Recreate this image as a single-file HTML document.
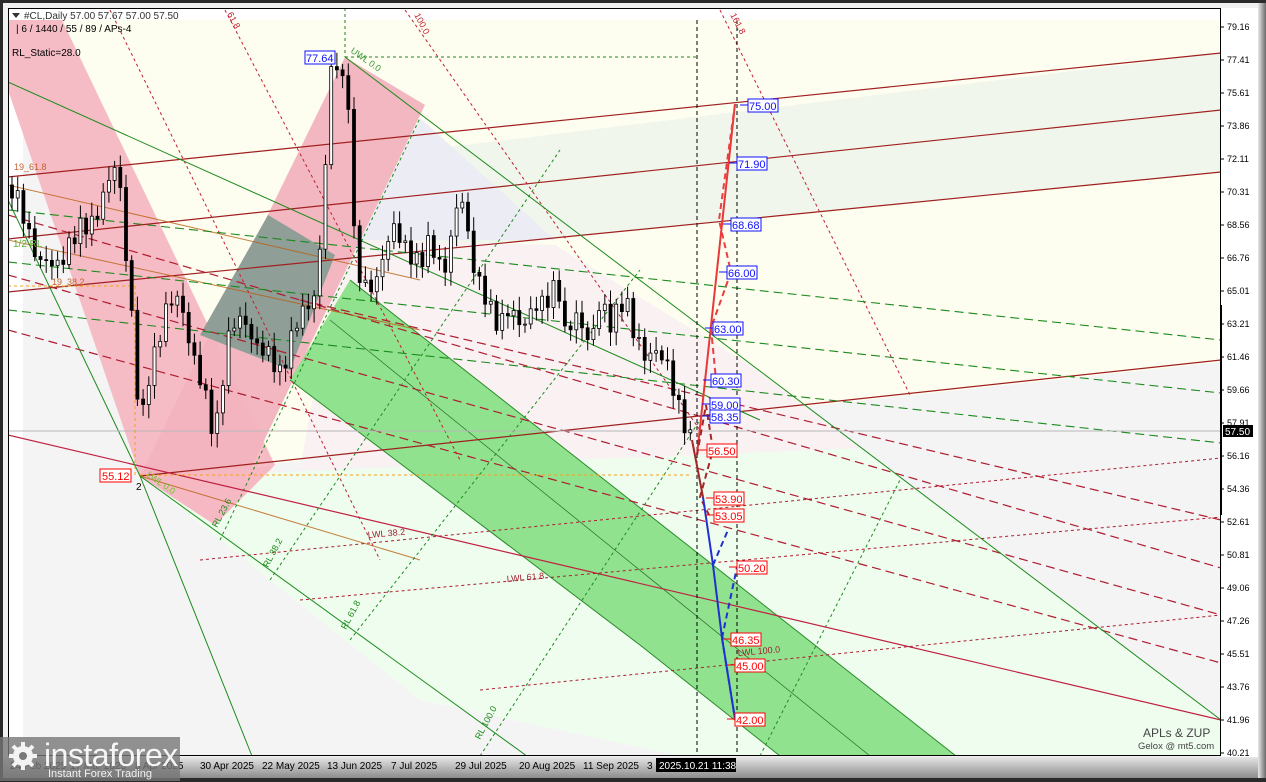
<!DOCTYPE html>
<html><head><meta charset="utf-8"><style>
html,body{margin:0;padding:0;background:#3a3a3a;}
#w{position:relative;width:1266px;height:782px;overflow:hidden;background:linear-gradient(#d8d8d8,#9a9a9a);}
svg{position:absolute;left:0;top:0;}
text{font-family:"Liberation Sans",sans-serif;}
</style></head><body><div id="w">
<svg id="s" width="1266" height="782" viewBox="0 0 1266 782">
<defs>
<linearGradient id="fr" x1="0" x2="1"><stop offset="0" stop-color="#e8e8e8"/><stop offset="1" stop-color="#6a6a6a"/></linearGradient>
<linearGradient id="bt" x1="0" y1="0" x2="0" y2="1"><stop offset="0" stop-color="#e6e6e6"/><stop offset="1" stop-color="#8c8c8c"/></linearGradient>
<clipPath id="cp"><rect x="9" y="9" width="1212" height="747"/></clipPath>
</defs>
<rect x="0" y="0" width="1266" height="782" fill="#2a2a2a"/>
<rect x="3" y="3" width="1257" height="774" fill="#f0f0f0"/>
<rect x="1258" y="3" width="8" height="775" fill="url(#fr)"/>
<rect x="3" y="757" width="1255" height="21" fill="url(#bt)"/>
<rect x="1221" y="8" width="37" height="749" fill="#fff"/>
<g clip-path="url(#cp)">
<rect x="8" y="8" width="1213" height="748" fill="#f4f4f4"/>
<rect x="8" y="8" width="15" height="748" fill="#fff"/>
<polygon points="50,20 1221,20 1221,362 140,478" fill="#fefef0"/>
<rect x="8" y="8" width="1213" height="12" fill="#fff"/>
<polygon points="300,165 1221,53 1221,172 300,263" fill="#f1f6ec"/>
<polygon points="140,478 860,448 1221,720 1221,756 252,756 140,476" fill="#effdef"/>
<polygon points="140,476 420,700 680,756 252,756" fill="#f4f4f4"/>
<polygon points="140,476 252,756 23,756 23,470" fill="#f4f4f4"/>
<polygon points="350,240 555,245 750,365 860,448 700,455 300,470 330,300" fill="#f9f1f2"/>
<polygon points="360,240 420,118 555,240" fill="#ececf4"/>
<polygon points="8,20 62,20 275,465 140,476 8,90" fill="#f6b8c2" opacity="0.95"/>
<polygon points="140,476 345,57 425,105 250,470" fill="#f2b3bf" opacity="0.95"/>
<polygon points="140,476 275,465 215,525" fill="#f6b8c2"/>
<polygon points="200,335 268,215 335,255 290,370" fill="#8f9e96"/>
<polygon points="350,280 640,508 956,756 780,756 640,645 290,380" fill="#90e28f"/>
<line x1="640" y1="645" x2="780" y2="756" stroke="#2a8a2a" stroke-width="1"/>
<line x1="290" y1="380" x2="640" y2="645" stroke="#2a8a2a"/>
<line x1="350" y1="280" x2="956" y2="756" stroke="#2a8a2a"/>
<line x1="330" y1="320" x2="870" y2="756" stroke="#2a6a2a" stroke-width="0.7"/>
<g stroke="#a02020" stroke-width="1.2" fill="none">
<line x1="8" y1="177" x2="1221" y2="53"/>
<line x1="8" y1="239" x2="1221" y2="110"/>
<line x1="8" y1="292" x2="1221" y2="172"/>
<line x1="140" y1="476" x2="1221" y2="360"/>
<line x1="8" y1="435" x2="1221" y2="720" stroke="#c02040"/>
</g>
<g stroke="#b86010" stroke-width="1" fill="none" opacity="0.8">
<line x1="8" y1="185" x2="420" y2="280"/>
<line x1="8" y1="240" x2="420" y2="330"/>
<line x1="140" y1="476" x2="420" y2="560"/>
</g>
<g stroke="#b01c30" stroke-width="1.2" stroke-dasharray="9,5" fill="none">
<line x1="8" y1="215" x2="1221" y2="568"/>
<line x1="8" y1="275" x2="1221" y2="615"/>
<line x1="8" y1="330" x2="1221" y2="663"/>
<line x1="300" y1="300" x2="1221" y2="520"/>
</g>
<g stroke="#b01c30" stroke-width="1" stroke-dasharray="3,3" fill="none">
<line x1="200" y1="560" x2="1221" y2="458"/>
<line x1="300" y1="600" x2="1221" y2="517"/>
<line x1="480" y1="690" x2="1221" y2="615"/>
</g>
<g stroke="#c02030" stroke-width="1" stroke-dasharray="3,3" fill="none">
<line x1="225" y1="10" x2="460" y2="460"/>
<line x1="110" y1="10" x2="380" y2="560"/>
<line x1="405" y1="10" x2="700" y2="430"/>
<line x1="720" y1="10" x2="910" y2="395"/>
</g>
<g stroke="#1c8a1c" stroke-width="1.1" stroke-dasharray="9,5" fill="none">
<line x1="8" y1="210" x2="1221" y2="340"/>
<line x1="8" y1="262" x2="1221" y2="393"/>
<line x1="8" y1="310" x2="1221" y2="443"/>
</g>
<g stroke="#1c8a1c" stroke-width="1" fill="none">
<line x1="345" y1="57" x2="1221" y2="720"/>
<line x1="8" y1="82" x2="760" y2="420"/>
<line x1="140" y1="476" x2="252" y2="756"/>
<line x1="140" y1="476" x2="560" y2="780"/>
<line x1="8" y1="200" x2="140" y2="476"/>
</g>
<g stroke="#1c8a1c" stroke-width="1" stroke-dasharray="3,3" fill="none">
<line x1="220" y1="540" x2="420" y2="118"/>
<line x1="270" y1="580" x2="560" y2="150"/>
<line x1="350" y1="640" x2="640" y2="270"/>
<line x1="480" y1="756" x2="700" y2="420"/>
<line x1="760" y1="756" x2="900" y2="480"/>
<line x1="345" y1="8" x2="345" y2="57"/>
</g>
<line x1="345" y1="57" x2="697" y2="57" stroke="#1c8a1c" stroke-dasharray="3,3"/>
<line x1="8" y1="431" x2="1221" y2="431" stroke="#b8b8b8"/>
<line x1="8" y1="286" x2="135" y2="286" stroke="#f0a020" stroke-dasharray="3,3"/>
<line x1="135" y1="286" x2="135" y2="476" stroke="#f0a020" stroke-dasharray="3,3"/>
<line x1="140" y1="475" x2="690" y2="475" stroke="#f0a020" stroke-dasharray="3,3"/>
<line x1="697" y1="20" x2="697" y2="756" stroke="#000" stroke-dasharray="4,3"/>
<line x1="737" y1="20" x2="737" y2="756" stroke="#000" stroke-dasharray="4,3"/>
<g id="candles"></g>
<g fill="none" stroke-width="2">
<line x1="697" y1="455" x2="735" y2="104" stroke="#e83838"/>
<polyline points="735,104 719,220 731,272 711,328 716,380" stroke="#e84040" stroke-dasharray="6,4"/>
<polyline points="697,455 706,405 713,450 700,497 709,515" stroke="#a02828" stroke-dasharray="6,4"/>
<line x1="692" y1="440" x2="703" y2="497" stroke="#a02828"/>
<polyline points="703,497 713,565 722,638 735,719" stroke="#2030d0"/>
<polyline points="713,565 728,530" stroke="#2030d0" stroke-dasharray="6,4"/>
<polyline points="722,638 737,567" stroke="#2030d0" stroke-dasharray="6,4"/>
<polyline points="722,638 735,719" stroke="#2030d0" stroke-dasharray="6,4"/>
</g>
<g font-size="11" text-anchor="start">
<text x="368" y="538" fill="#a02030" font-size="9" transform="rotate(-5 368 538)">LWL 38.2</text>
<text x="507" y="582" fill="#a02030" font-size="9" transform="rotate(-5 507 582)">LWL 61.8</text>
<text x="738" y="656" fill="#a02030" font-size="9" transform="rotate(-5 738 656)">LWL 100.0</text>
<text x="14" y="170" fill="#c06030" font-size="9">19_61.8</text>
<text x="13" y="247" fill="#60b030" font-size="10">1/2 RL</text>
<text x="52" y="285" fill="#c06030" font-size="9">19_38.2</text>
<text x="350" y="52" fill="#3a9a3a" font-size="9" transform="rotate(35 350 52)">UWL 0.0</text>
<text x="146" y="476" fill="#70c030" font-size="9" transform="rotate(35 146 476)">LWL 0.0</text>
<text x="268" y="568" fill="#1c8a1c" font-size="9" transform="rotate(-62 268 568)">RL 38.2</text>
<text x="346" y="630" fill="#1c8a1c" font-size="9" transform="rotate(-62 346 630)">RL 61.8</text>
<text x="480" y="740" fill="#1c8a1c" font-size="9" transform="rotate(-62 480 740)">RL 100.0</text>
<text x="217" y="528" fill="#1c8a1c" font-size="9" transform="rotate(-62 217 528)">RL 23.6</text>
<text x="227" y="14" fill="#c02030" font-size="9" transform="rotate(62 227 14)">61.8</text>
<text x="414" y="15" fill="#c02030" font-size="9" transform="rotate(62 414 15)">100.0</text>
<text x="730" y="15" fill="#c02030" font-size="9" transform="rotate(62 730 15)">161.8</text>
</g>
</g>
<rect x="8.5" y="8.5" width="1212" height="747" fill="none" stroke="#000"/>
<rect x="1220" y="305" width="2" height="210" fill="#000"/>
<path d="M12,13 L20,13 L16,18 Z" fill="#333"/>
<text x="24" y="19" font-size="10" fill="#333">#CL,Daily  57.00 57.67 57.00 57.50</text>
<text x="16" y="32" font-size="10" fill="#000">| 6 / 1440 / 55 / 89 / APs-4</text>
<text x="12" y="56" font-size="10" fill="#000">RL_Static=28.0</text>
<g font-size="11">
<rect x="305" y="51" width="30" height="13" fill="#fff" stroke="#1010ff"/><text x="306" y="62" fill="#1010ff">77.64</text>
<rect x="100" y="469" width="31" height="13" fill="#fff" stroke="#f00"/><text x="102" y="480" fill="#f00">55.12</text>
<text x="136" y="490" fill="#000" font-size="10">2</text>
</g>
<g font-size="11" id="lbl"></g>
<g font-size="9" fill="#000" id="ax"></g>
<rect x="1223" y="425" width="30" height="12" fill="#000"/><text x="1225" y="435" font-size="10" fill="#fff">57.50</text>
<g font-size="10" fill="#000">
<text x="200" y="769">30 Apr 2025</text><text x="262" y="769">22 May 2025</text><text x="327" y="769">13 Jun 2025</text><text x="391" y="769">7 Jul 2025</text><text x="455" y="769">29 Jul 2025</text><text x="519" y="769">20 Aug 2025</text><text x="583" y="769">11 Sep 2025</text><text x="647" y="769">3</text>
<text x="70" y="769">17 Mar 2025</text><text x="135" y="769">8 Apr 2025</text><text x="10" y="769">24 Feb 2025</text>
</g>
<rect x="656" y="758" width="80" height="14" fill="#000"/><text x="659" y="769" font-size="10" fill="#fff">2025.10.21 11:38</text>
<text x="1143" y="737" font-family="Liberation Serif,serif" font-size="12" fill="#444">APLs &amp; ZUP</text>
<text x="1138" y="749" font-family="Liberation Serif,serif" font-size="9.5" fill="#444">Gelox @ mt5.com</text>
<rect x="0" y="737" width="180" height="44" fill="#777" opacity="0.8"/>
<g fill="#fff" opacity="0.9">
<circle cx="23" cy="756" r="10"/>
<g stroke="#fff" stroke-width="4"><line x1="23" y1="742" x2="23" y2="770"/><line x1="9" y1="756" x2="37" y2="756"/><line x1="13" y1="746" x2="33" y2="766"/><line x1="33" y1="746" x2="13" y2="766"/></g>
<circle cx="23" cy="756" r="4" fill="#777"/>
</g>
<text x="44" y="766" font-size="32" fill="#fff" opacity="0.92" letter-spacing="-0.5">instaforex</text>
<text x="48" y="777" font-size="11" fill="#fff" opacity="0.9">Instant Forex Trading</text>
</svg>
<script>
(function(){
var ns="http://www.w3.org/2000/svg";
function el(p,t,a,txt){var e=document.createElementNS(ns,t);for(var k in a)e.setAttribute(k,a[k]);if(txt)e.textContent=txt;p.appendChild(e);return e;}
var ax=document.getElementById('ax');
var v=["79.16","77.41","75.61","73.86","72.11","70.31","68.56","66.76","65.01","63.21","61.46","59.66","57.91","56.16","54.36","52.61","50.81","49.06","47.26","45.51","43.76","41.96","40.21"];
for(var i=0;i<v.length;i++){var y=27+i*33;el(ax,'line',{x1:1221,y1:y,x2:1224,y2:y,stroke:'#000'});el(ax,'text',{x:1227,y:y+3},v[i]);}
var L=document.getElementById('lbl');
var lb=[[75,748,105,'#1010ff'],[71.9,737,163,'#1010ff'],[68.68,731,224,'#1010ff'],[66,727,272,'#1010ff'],[63,713,328,'#1010ff'],[60.3,711,380,'#1010ff'],[59,710,404,'#1010ff'],[58.35,710,416,'#1010ff'],[56.5,707,450,'#f00'],[53.9,714,498,'#f00'],[53.05,714,515,'#f00'],[50.2,737,567,'#f00'],[46.35,731,639,'#f00'],[45,735,665,'#f00'],[42,735,719,'#f00']];
lb.forEach(function(b){var t=b[0].toFixed(2);el(L,'line',{x1:b[1]-8,y1:b[2],x2:b[1],y2:b[2],stroke:b[3]});el(L,'rect',{x:b[1],y:b[2]-6,width:30,height:13,fill:'#fff',stroke:b[3]});el(L,'text',{x:b[1]+1,y:b[2]+5,fill:b[3]},t);});
var kp=[[10,185],[20,210],[40,260],[55,270],[70,240],[90,225],[110,180],[118,165],[125,240],[135,350],[140,440],[150,370],[165,310],[180,300],[190,340],[200,380],[210,420],[215,440],[220,390],[230,330],[245,320],[260,350],[280,370],[295,330],[315,290],[322,230],[330,80],[338,60],[345,90],[350,100],[355,270],[365,290],[375,280],[385,250],[395,230],[410,250],[420,270],[430,240],[445,270],[455,220],[462,195],[470,245],[480,290],[495,320],[510,310],[520,330],[535,300],[545,310],[558,280],[565,330],[575,320],[590,340],[600,300],[610,330],[625,290],[635,340],[645,360],[655,345],[665,360],[675,400],[685,420],[692,440]];
function f(x){for(var i=1;i<kp.length;i++){if(x<=kp[i][0]){var a=kp[i-1],b=kp[i];return a[1]+(b[1]-a[1])*(x-a[0])/(b[0]-a[0]);}}return 440;}
var C=document.getElementById('candles'),prev=f(10);
for(var x=12;x<=692;x+=5.7){var c=f(x)+Math.sin(x*1.7)*9+Math.cos(x*0.9)*5;var o=prev;var hi=Math.min(o,c)-4-Math.abs(Math.sin(x*3.1))*10,lo=Math.max(o,c)+4+Math.abs(Math.cos(x*2.3))*10;
el(C,'line',{x1:x.toFixed(1),y1:hi.toFixed(1),x2:x.toFixed(1),y2:lo.toFixed(1),stroke:'#000'});
var bull=c<o;el(C,'rect',{x:(x-1.5).toFixed(1),y:Math.min(o,c).toFixed(1),width:3,height:Math.max(1,Math.abs(c-o)).toFixed(1),fill:bull?'#fff':'#000',stroke:'#000','stroke-width':0.8});prev=c;}
})();
</script>
</div></body></html>
